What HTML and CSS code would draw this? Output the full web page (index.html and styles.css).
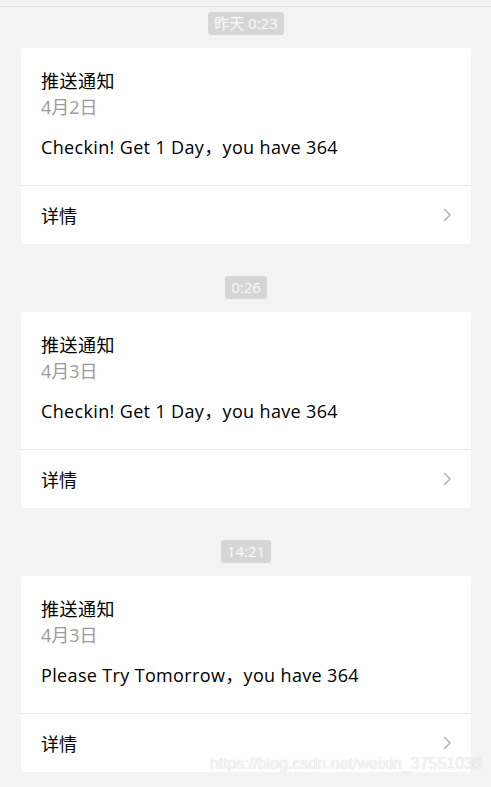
FILE: index.html
```html
<!DOCTYPE html>
<html lang="zh">
<head>
<meta charset="utf-8">
<link rel="stylesheet" href="styles.css">
</head>
<body>
<div class="topbar"></div>
<main class="feed">
  <section class="group">
    <div class="time"><span class="pill">昨天 0:23</span></div>
    <div class="card">
      <div class="card-body">
        <div class="title">推送通知</div>
        <div class="date">4月2日</div>
        <div class="content">Checkin! Get 1 Day，you have 364</div>
      </div>
      <div class="card-foot">
        <span>详情</span>
        <svg class="chev" width="10" height="16" viewBox="0 0 10 16"><path d="M2 2 L8 8 L2 14" fill="none" stroke="#b4b4b4" stroke-width="1.6"/></svg>
      </div>
    </div>
  </section>
  <section class="group">
    <div class="time"><span class="pill">0:26</span></div>
    <div class="card">
      <div class="card-body">
        <div class="title">推送通知</div>
        <div class="date">4月3日</div>
        <div class="content">Checkin! Get 1 Day，you have 364</div>
      </div>
      <div class="card-foot">
        <span>详情</span>
        <svg class="chev" width="10" height="16" viewBox="0 0 10 16"><path d="M2 2 L8 8 L2 14" fill="none" stroke="#b4b4b4" stroke-width="1.6"/></svg>
      </div>
    </div>
  </section>
  <section class="group">
    <div class="time"><span class="pill">14:21</span></div>
    <div class="card">
      <div class="card-body">
        <div class="title">推送通知</div>
        <div class="date">4月3日</div>
        <div class="content">Please Try Tomorrow，you have 364</div>
      </div>
      <div class="card-foot">
        <span>详情</span>
        <svg class="chev" width="10" height="16" viewBox="0 0 10 16"><path d="M2 2 L8 8 L2 14" fill="none" stroke="#b4b4b4" stroke-width="1.6"/></svg>
      </div>
    </div>
  </section>
</main>
<div class="watermark">https://blog.csdn.net/weixin_37551036</div>
</body>
</html>
```
FILE: styles.css
```css
html, body {
  margin: 0;
  padding: 0;
  background: #f3f3f3;
  font-family: "Open Sans", "Noto Sans CJK SC", sans-serif;
  color: #000;
}
body {
  position: relative;
  height: 787px;
  overflow: hidden;
}
.topbar {
  height: 6px;
  border-bottom: 1px solid #e3e3e3;
}
.feed {
  padding: 5px 20px 0 21px;
  display: flex;
  flex-direction: column;
  gap: 32px;
}
.group {
  display: flex;
  flex-direction: column;
  gap: 13px;
}
.time {
  display: flex;
  justify-content: center;
}
.pill {
  display: inline-block;
  height: 23px;
  line-height: 23px;
  padding: 0 6px;
  font-size: 15px;
  color: #fbfbfb;
  background: #d6d6d6;
  border-radius: 3px;
}
.card {
  background: #fff;
  border-radius: 3px;
}
.card-body {
  padding: 20px 20px 25px 20px;
  border-bottom: 1px solid #e6e6e6;
  font-size: 18px;
  line-height: 26px;
}
.title {
  letter-spacing: 0.5px;
}
.date {
  color: #9b9b9b;
}
.content {
  margin-top: 14px;
  letter-spacing: 0.35px;
}
.card-foot {
  height: 58px;
  padding: 0 20px;
  display: flex;
  align-items: center;
  justify-content: space-between;
  font-size: 18px;
}
.chev {
  margin-right: -1px;
}
.watermark {
  position: absolute;
  right: 9px;
  top: 755px;
  font-family: "Liberation Sans", Arial, sans-serif;
  font-size: 16px;
  color: rgba(255,255,255,0.85);
  text-shadow: 0 0 1px rgba(0,0,0,0.25);
}
```
